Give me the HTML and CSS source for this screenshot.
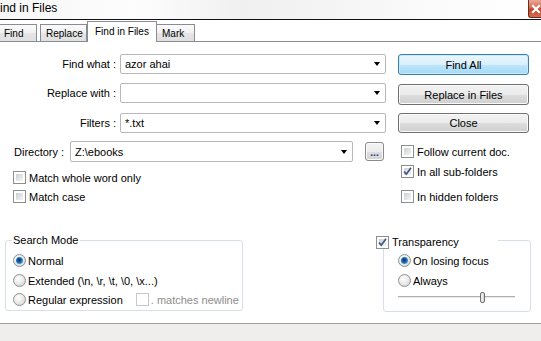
FILE: index.html
```html
<!DOCTYPE html>
<html>
<head>
<meta charset="utf-8">
<link rel="stylesheet" href="styles.css">
</head>
<body>
<div class="window">
  <div class="titlebar">
    <span class="title">ind in Files</span>
    <span class="close"><svg width="10" height="10" viewBox="0 0 10 10"><path d="M2 2 L8 8 M8 2 L2 8" stroke="#fff" stroke-width="2.2" stroke-linecap="square"/></svg></span>
  </div>
  <div class="tabs">
    <div class="tab t-find">Find</div>
    <div class="tab t-replace">Replace</div>
    <div class="tab active t-fif">Find in Files</div>
    <div class="tab t-mark">Mark</div>
  </div>
  <div class="content">
    <div class="top">
      <div class="leftcol">
        <div class="row r-find"><span class="lbl">Find what :</span><div class="combo"><span class="ctext">azor ahai</span><i class="arrow"></i></div></div>
        <div class="row r-repl"><span class="lbl">Replace with :</span><div class="combo"><span class="ctext"></span><i class="arrow"></i></div></div>
        <div class="row r-filt"><span class="lbl">Filters :</span><div class="combo"><span class="ctext">*.txt</span><i class="arrow"></i></div></div>
        <div class="dirrow"><span class="dirlbl">Directory :</span><div class="combo dircombo"><span class="ctext">Z:\ebooks</span><i class="arrow"></i></div><div class="browse">...</div></div>
        <div class="check cl1"><span class="cb"></span><span>Match whole word only</span></div>
        <div class="check cl2"><span class="cb"></span><span>Match case</span></div>
      </div>
      <div class="rightcol">
        <div class="btn primary b1">Find All</div>
        <div class="btn b2">Replace in Files</div>
        <div class="btn b3">Close</div>
        <div class="check cr1"><span class="cb"></span><span>Follow current doc.</span></div>
        <div class="check cr2"><span class="cb checked"><svg width="9" height="9" viewBox="0 0 9 9"><path d="M1 4.5 L3.3 7.2 L8 0.8" fill="none" stroke="#3f5587" stroke-width="1.7"/></svg></span><span>In all sub-folders</span></div>
        <div class="check cr3"><span class="cb"></span><span>In hidden folders</span></div>
      </div>
    </div>
    <div class="groups">
      <div class="group sm">
        <div class="legend">Search Mode</div>
        <div class="radio g1"><span class="rb on"></span><span>Normal</span></div>
        <div class="radio g2"><span class="rb"></span><span>Extended (\n, \r, \t, \0, \x...)</span></div>
        <div class="radio g3"><span class="rb"></span><span>Regular expression</span><span class="check dis"><span class="cb"></span><span>. matches newline</span></span></div>
      </div>
      <div class="group tr">
        <div class="legend tlegend"><span class="cb checked"><svg width="9" height="9" viewBox="0 0 9 9"><path d="M1 4.5 L3.3 7.2 L8 0.8" fill="none" stroke="#3f5587" stroke-width="1.7"/></svg></span><span>Transparency</span></div>
        <div class="radio t1"><span class="rb on"></span><span>On losing focus</span></div>
        <div class="radio t2"><span class="rb"></span><span>Always</span></div>
        <div class="slider"><span class="thumb"></span></div>
      </div>
    </div>
  </div>
  <div class="statusbar"></div>
</div>
</body>
</html>
```

FILE: styles.css
```css
* { box-sizing: border-box; margin: 0; padding: 0; }
html, body { width: 541px; height: 341px; overflow: hidden; }
body {
  font-family: "Liberation Sans", Arial, sans-serif;
  font-size: 11px;
  color: #000;
  background: #fff;
}
.window { display: flex; flex-direction: column; height: 341px; }

/* title bar */
.titlebar {
  height: 20px;
  border-bottom: 1px solid #111;
  display: flex;
  justify-content: space-between;
  align-items: flex-start;
  background: linear-gradient(90deg, #f6f6f6 0%, #fdfdfd 25%, #f0f0f0 45%, #f4f4f4 60%, #fbfbfb 80%, #fff 100%);
}
.title { font-size: 12px; margin-left: 0; line-height: 16px; color: #000; }
.close {
  width: 13px;
  height: 18px;
  border: 1px solid #6d2a1e;
  border-top: none;
  border-right: none;
  border-radius: 0 0 0 3px;
  background: linear-gradient(#eaa898, #d46a52 45%, #c2422c 55%, #d66f55);
  display: flex;
  align-items: center;
  padding-left: 2px;
}

/* tabs */
.tabs {
  height: 22px;
  display: flex;
  align-items: flex-end;
  border-bottom: 1px solid #898c95;
  font-size: 10px;
}
.tab {
  height: 17px;
  border: 1px solid #898c95;
  border-bottom: none;
  background: linear-gradient(#fbfbfb, #f0f0f0 50%, #e5e5e5 51%, #e0e0e0);
  padding: 2px 0 0 5px;
  line-height: 13px;
  white-space: nowrap;
}
.t-find { margin-left: -1px; width: 38px; padding-left: 4px; }
.t-replace { margin-left: 3px; width: 47px; }
.t-fif {
  width: 70px;
  height: 21px;
  margin-bottom: -1px;
  background: #fff;
  padding: 3px 0 0 7px;
  position: relative;
  z-index: 1;
}
.t-mark { width: 38px; border-left: none; }

/* content */
.content { height: 281px; }
.top { display: flex; }
.leftcol { width: 386px; }
.rightcol { width: 131px; margin-left: 12px; }

.row { display: flex; height: 20px; align-items: center; }
.r-find { margin-top: 12px; }
.r-repl { margin-top: 9px; }
.r-filt { margin-top: 10px; }
.lbl { width: 116px; text-align: right; }
.combo {
  height: 20px;
  width: 266px;
  margin-left: 4px;
  border: 1px solid #b8b8b8;
  border-radius: 2px;
  display: flex;
  align-items: center;
  background: #fff;
}
.ctext { padding-left: 4px; }
.arrow {
  margin-left: auto;
  margin-right: 5px;
  width: 0;
  height: 0;
  border-left: 3.5px solid transparent;
  border-right: 3.5px solid transparent;
  border-top: 4px solid #000;
}
.dirrow { display: flex; margin-top: 8px; height: 21px; align-items: center; }
.dirlbl { width: 70px; padding-left: 14px; }
.dircombo { width: 283px; height: 21px; margin-left: 0; }
.browse {
  margin-left: 12px;
  width: 19px;
  height: 19px;
  border: 1px solid #8a8a8a;
  border-radius: 3px;
  background: linear-gradient(#f4f4f4, #ececec 50%, #dedede 51%, #d3d3d3);
  box-shadow: inset 0 0 0 1px #fbfbfb;
  font-size: 10px;
  line-height: 17px;
  padding-top: 1px;
  text-align: center;
  color: #1d3c8f;
  font-weight: bold;
}

/* checkboxes */
.check { display: flex; align-items: center; height: 13px; white-space: nowrap; }
.cb {
  width: 13px;
  height: 13px;
  flex: none;
  border: 1px solid #8e8f8f;
  padding: 2px;
  background: linear-gradient(135deg, #cbced3, #f6f6f6) content-box, #fff;
  margin-right: 3px;
  display: flex;
  align-items: center;
  justify-content: center;
}
.cb.checked svg { flex: none; }
.cl1 { margin-top: 9px; margin-left: 13px; }
.cl2 { margin-top: 6px; margin-left: 13px; }
.cr1 { margin-top: 12px; margin-left: 3px; }
.cr2 { margin-top: 7px; margin-left: 3px; }
.cr3 { margin-top: 12px; margin-left: 3px; }

/* buttons */
.btn {
  height: 21px;
  border: 1px solid #707070;
  border-radius: 3px;
  background: linear-gradient(#f2f2f2, #ebebeb 50%, #dddddd 51%, #cfcfcf);
  box-shadow: inset 0 0 0 1px #fafafa;
  display: flex;
  align-items: center;
  justify-content: center;
}
.btn.primary {
  border-color: #3c7fb1;
  background: linear-gradient(#eaf6fd, #d9f0fc 50%, #bee6fd 51%, #a7d9f5);
  box-shadow: inset 0 0 0 1px #c4ecfc;
}
.b1 { margin-top: 12px; }
.b2 { margin-top: 9px; }
.b3 { margin-top: 8px; height: 20px; }

/* groups */
.groups { display: flex; margin-top: 37px; }
.group {
  position: relative;
  border: 1px solid #d5dfe5;
  border-radius: 3px;
}
.sm { margin-left: 5px; width: 238px; height: 71px; padding-left: 7px; }
.tr { margin-left: 140px; width: 148px; height: 72px; padding-left: 14px; }
.legend {
  position: absolute;
  top: -8px;
  left: 6px;
  background: #fff;
  padding: 0 2px 0 1px;
  line-height: 14px;
}
.tlegend {
  left: -8px;
  display: flex;
  align-items: center;
  width: 122px;
  padding: 0;
  top: -5px;
  height: 12px;
}
.tlegend .cb { margin-right: 3px; }

.radio { display: flex; align-items: center; height: 13px; white-space: nowrap; }
.rb {
  width: 13px;
  height: 13px;
  flex: none;
  border-radius: 50%;
  border: 1px solid #8e8f8f;
  background: radial-gradient(circle at 40% 35%, #ffffff 0%, #eeeeee 40%, #cfcfcf 100%);
  margin-right: 2px;
  position: relative;
}
.rb.on::after {
  content: "";
  position: absolute;
  left: 2px;
  top: 2px;
  width: 7px;
  height: 7px;
  border-radius: 50%;
  background: radial-gradient(circle at 45% 45%, #0a2d5c 0%, #1a5c9c 35%, #3e9ae0 70%, #9bd2f4 100%);
}
.g1 { margin-top: 13px; }
.g2 { margin-top: 7px; }
.g3 { margin-top: 6px; }
.dis { margin-left: 13px; color: #8d8d8d; }
.dis .cb { border-color: #c8c8c8; background: #fff; margin-right: 2px; }
.t1 { margin-top: 13px; }
.t2 { margin-top: 7px; }
.slider {
  position: relative;
  margin-top: 9px;
  width: 117px;
  height: 2px;
  border-top: 1px solid #b0b0b0;
  border-bottom: 1px solid #e8e8e8;
}
.thumb {
  position: absolute;
  left: 82px;
  top: -5px;
  width: 5px;
  height: 11px;
  border: 1px solid #6e6e6e;
  border-radius: 2px;
  background: linear-gradient(90deg, #f4f4f4, #d9d9d9);
}

/* status bar */
.statusbar {
  height: 18px;
  border-top: 1px solid #a0a0a0;
  background: #f0eeed;
}
```
